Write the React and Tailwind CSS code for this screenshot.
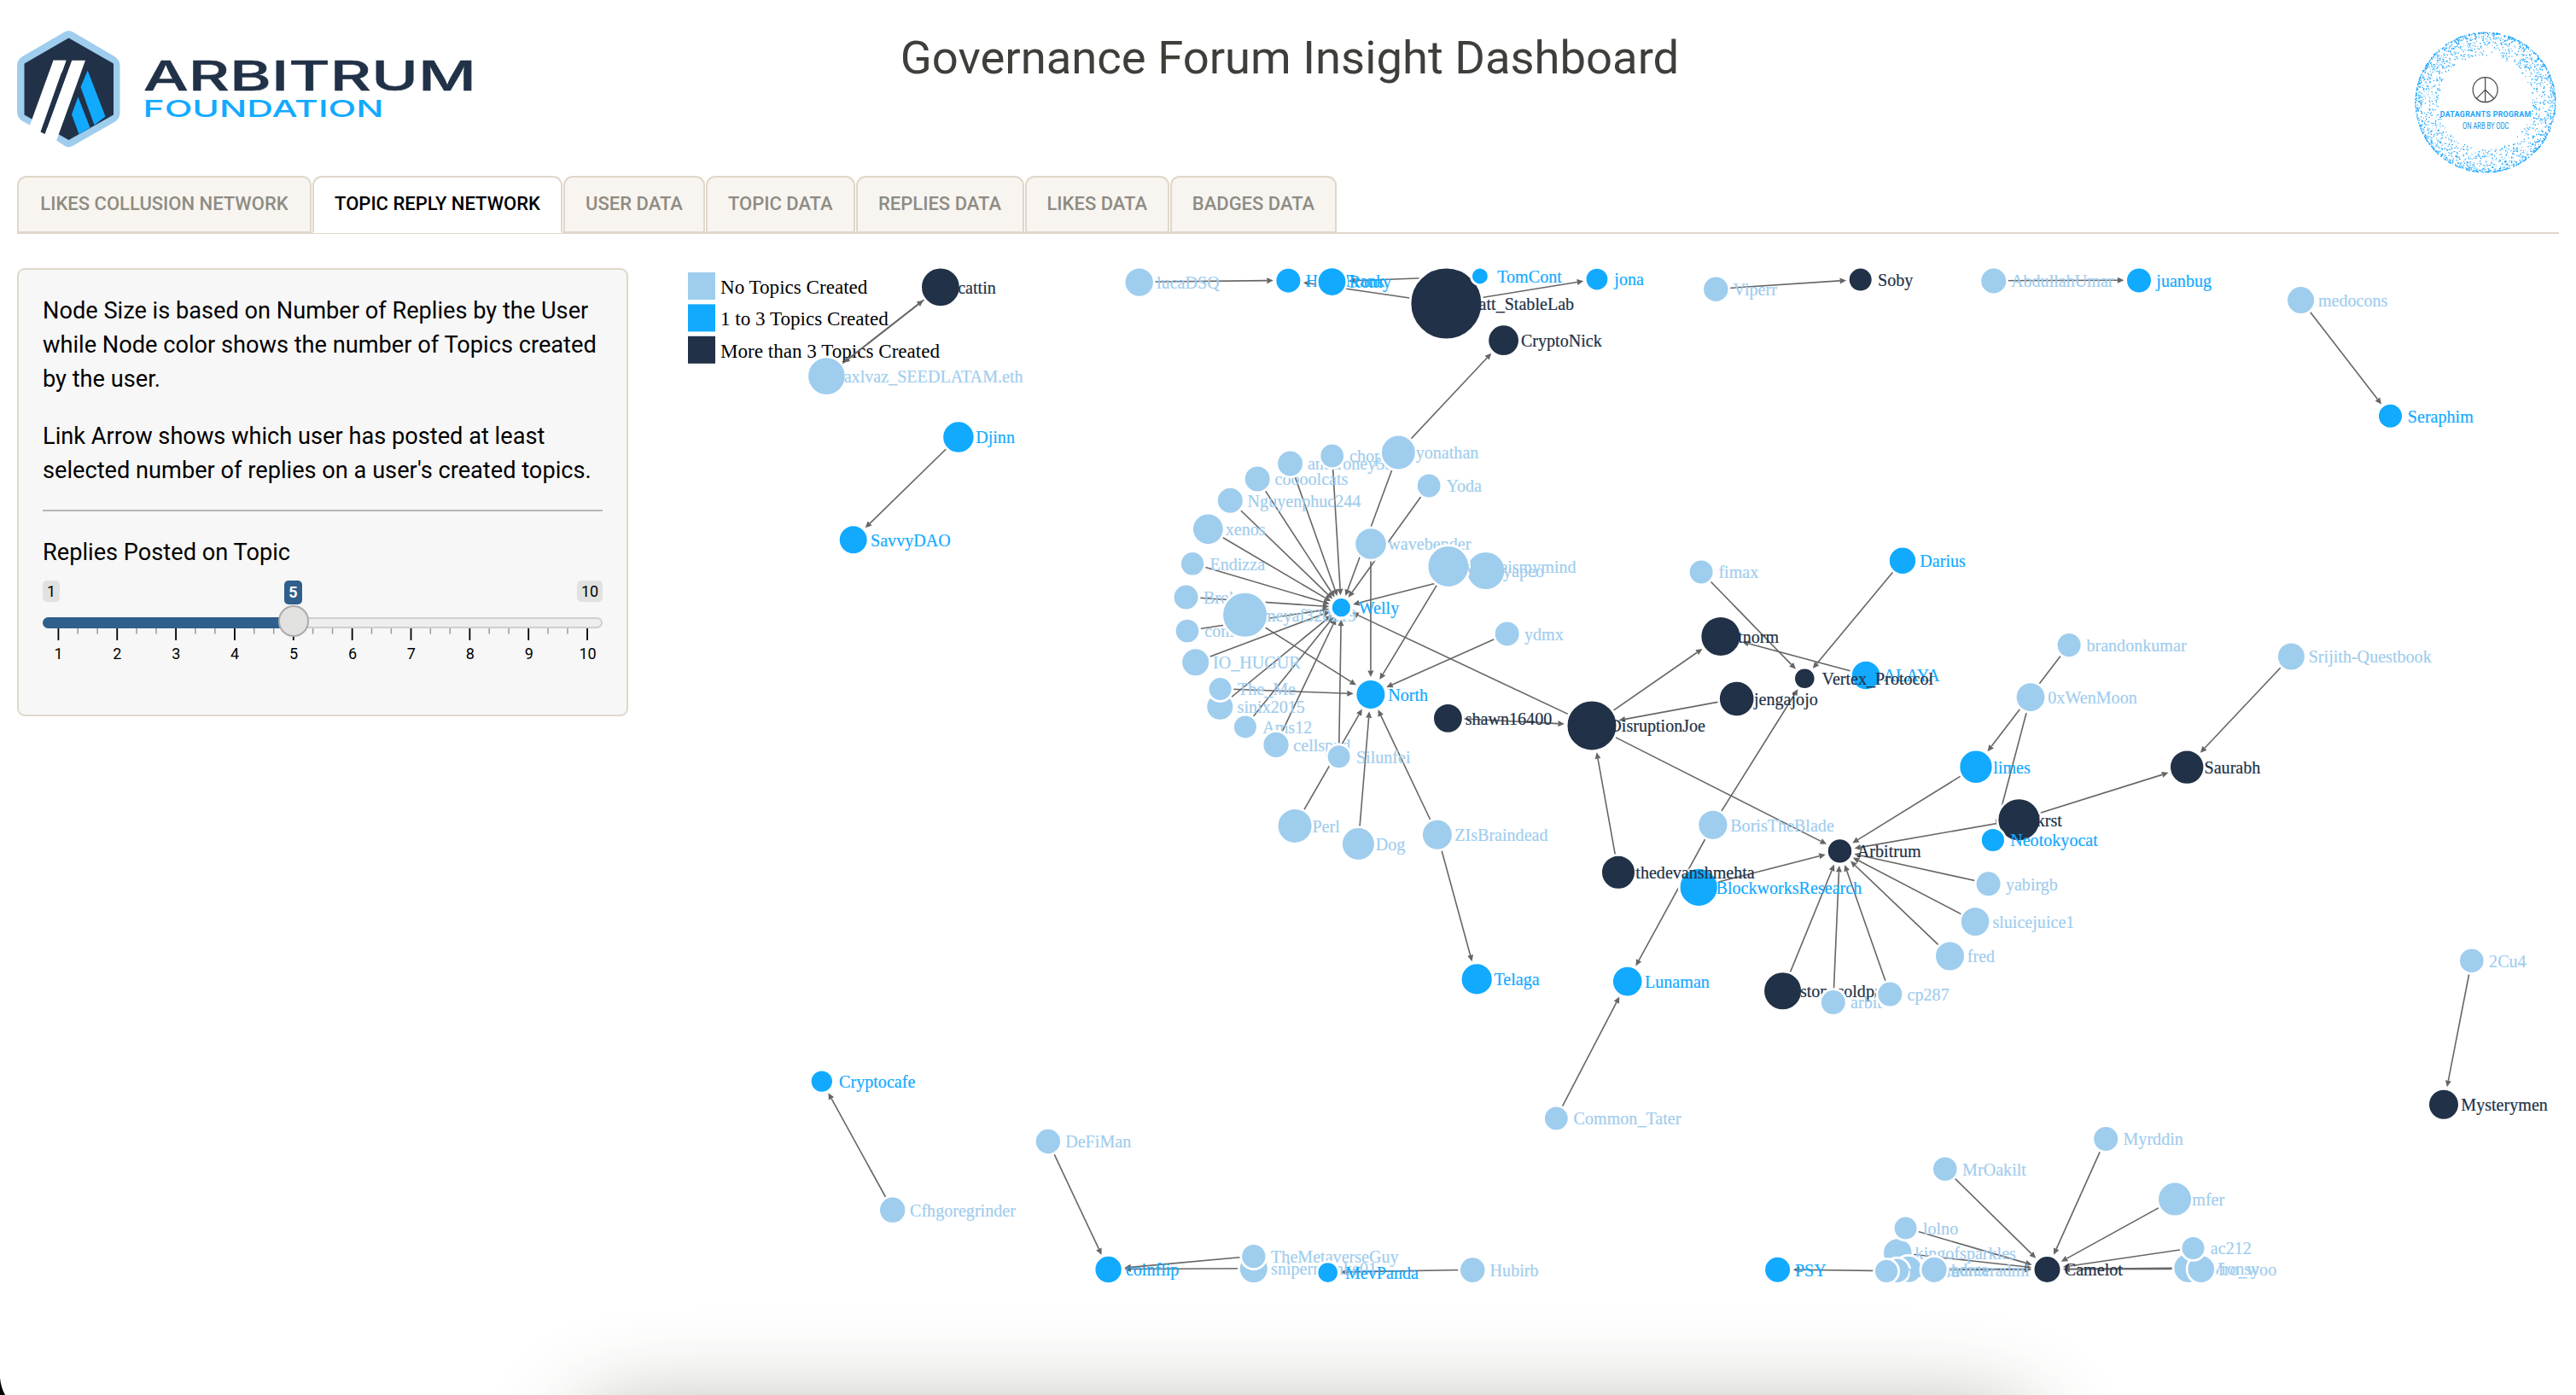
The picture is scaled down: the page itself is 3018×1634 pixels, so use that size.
import React from "react";

const L = "#9fcdee";
const B = "#12aaff";
const D = "#213147";

/* id, label, x, y, radius, colour; array order is paint order */
const NODES = [
  ["cattin", "cattin", 1101.9, 336, 21.9, D],
  ["axl", "axlvaz_SEEDLATAM.eth", 968.4, 440.3, 21.3, L],
  ["luca", "lucaDSQ", 1334.7, 330.3, 16.2, L],
  ["djinn", "Djinn", 1122.9, 511.7, 17.7, B],
  ["savvy", "SavvyDAO", 999.7, 632, 16, B],
  ["hwf", "HWTFrank", 1509.4, 328.4, 14, B],
  ["romy", "Romy", 1560.5, 329.8, 15.9, B],
  ["matt", "Matt_StableLab", 1694.4, 355.3, 41, D],
  ["tom", "TomCont", 1733.9, 323.2, 9, B],
  ["jona", "jona", 1871, 326.8, 12.4, B],
  ["nick", "CryptoNick", 1761.6, 398.4, 17.4, D],
  ["xenos", "xenos", 1415.4, 619.5, 17.4, L],
  ["nguyen", "Nguyenphuc244", 1441.3, 586, 14.5, L],
  ["cats", "coooolcats", 1473.2, 560.6, 14.5, L],
  ["anth", "anthroney55", 1511.6, 542.6, 14.5, L],
  ["chop", "chopper", 1560.7, 533.6, 13.4, L],
  ["yon", "yonathan", 1638.4, 529.7, 19.4, L],
  ["endizza", "Endizza", 1397.1, 660, 13.2, L],
  ["yoda", "Yoda", 1674.1, 568.7, 13.4, L],
  ["wave", "wavebender", 1606, 636.7, 17.8, L],
  ["bro", "Broke", 1389.6, 699.3, 14, L],
  ["conf", "confuse", 1391, 738.7, 13.3, L],
  ["meyaf", "meyaf320219", 1458.6, 720, 25.5, L],
  ["io", "IO_HUGUR", 1400.7, 775.4, 15.5, L],
  ["sinix", "sinix2015", 1429.3, 827.5, 15, L],
  ["theme", "The_Me", 1429.6, 806.8, 13, L],
  ["ams", "Ams12", 1458.9, 851.1, 13, L],
  ["cell", "cellspud", 1495, 872.1, 14.6, L],
  ["sil", "Silunfei", 1568.6, 886, 13, L],
  ["perl", "Perl", 1517.1, 967.1, 19.5, L],
  ["dog", "Dog", 1591.4, 988.2, 18.5, L],
  ["zis", "ZIsBraindead", 1683.9, 977.5, 17, L],
  ["welly", "Welly", 1571.4, 711.4, 10.6, B],
  ["north", "North", 1605.9, 813.2, 16.5, B],
  ["ydmx", "ydmx", 1765.7, 742.1, 14, L],
  ["yapeo", "yapeo", 1740.7, 668.2, 21.6, L],
  ["where", "whereismymind", 1696.8, 663.2, 23.4, L],
  ["shawn", "shawn16400", 1696.4, 841, 16.4, D],
  ["joe", "DisruptionJoe", 1865, 849.6, 28.5, D],
  ["fimax", "fimax", 1993.1, 669.7, 13.5, L],
  ["darius", "Darius", 2229, 656.4, 15.2, B],
  ["tnorm", "tnorm", 2015.9, 745.1, 22.5, D],
  ["alaya", "ALAYA", 2186.1, 790.7, 16.3, B],
  ["vertex", "Vertex_Protocol", 2114.3, 794.5, 11.3, D],
  ["jenga", "jengajojo", 2034.7, 818.2, 19.8, D],
  ["boris", "BorisTheBlade", 2006.9, 966, 16.6, L],
  ["block", "BlockworksResearch", 1990.2, 1039, 21.6, B],
  ["thedev", "thedevanshmehta", 1896, 1021.4, 19, D],
  ["arb", "Arbitrum", 2155.5, 996.6, 13.7, D],
  ["telaga", "Telaga", 1730.2, 1146.6, 17.6, B],
  ["luna", "Lunaman", 1906.7, 1149.3, 16.8, B],
  ["stone", "stonecoldpat", 2088.6, 1160.4, 21.5, D],
  ["arbit", "arbit", 2147.8, 1173.8, 14, L],
  ["cp", "cp287", 2214.3, 1164.2, 14, L],
  ["brandon", "brandonkumar", 2424.1, 755.3, 13.6, L],
  ["wen", "0xWenMoon", 2379, 816.3, 16.4, L],
  ["limes", "limes", 2315, 898, 18.7, B],
  ["saurabh", "Saurabh", 2562.2, 898.3, 19.2, D],
  ["srijith", "Srijith-Questbook", 2684.4, 768.7, 15.5, L],
  ["krst", "krst", 2365.4, 960, 24, D],
  ["neo", "Neotokyocat", 2334.9, 983.7, 13.1, B],
  ["yab", "yabirgb", 2329.6, 1035, 14, L],
  ["sluice", "sluicejuice1", 2314.1, 1079.3, 16.3, L],
  ["fred", "fred", 2284.5, 1119.7, 16.5, L],
  ["myr", "Myrddin", 2467.2, 1333.7, 14, L],
  ["oak", "MrOakilt", 2278.8, 1369, 13.8, L],
  ["mfer", "mfer", 2548, 1404.3, 19, L],
  ["king", "kingofsparkles", 2223.3, 1467.3, 16.3, L],
  ["lolno", "lolno", 2232.6, 1438.3, 13, L],
  ["psy", "PSY", 2082.6, 1487, 14.5, B],
  ["andrea", "oxandrea", 2236, 1486.5, 15, L],
  ["r2", "sandra", 2222.5, 1488, 13.8, L],
  ["r1", "hunt", 2210.1, 1488.6, 13.1, L],
  ["hunter", "hunteradmi", 2266, 1487, 14.6, L],
  ["vronsy", "Wronsy", 2564, 1485, 16.6, L],
  ["woo", "fro_woo", 2578.8, 1486.3, 15.3, L],
  ["ac", "ac212", 2569.5, 1461.7, 13, L],
  ["camelot", "Camelot", 2398.5, 1486.7, 15, D],
  ["ccafe", "Cryptocafe", 962.8, 1266.3, 12.2, B],
  ["cfh", "Cfhgoregrinder", 1045.7, 1417, 14.7, L],
  ["defi", "DeFiMan", 1227.9, 1336.7, 14.2, L],
  ["coin", "coinflip", 1298.6, 1486.7, 15.2, B],
  ["sniper", "snipermonke01", 1468.8, 1485.8, 16, L],
  ["meta", "TheMetaverseGuy", 1468.8, 1471.3, 13.7, L],
  ["mev", "MevPanda", 1555.7, 1490.3, 11.3, B],
  ["hub", "Hubirb", 1725.3, 1487.3, 14.3, L],
  ["common", "Common_Tater", 1823.3, 1309.7, 13.4, L],
  ["viperr", "Viperr", 2010.3, 338.5, 14.2, L],
  ["soby", "Soby", 2179.7, 327.3, 13, D],
  ["abd", "AbdullahUmar", 2335.7, 328.8, 14.5, L],
  ["juan", "juanbug", 2506, 328.2, 14, B],
  ["medo", "medocons", 2695.6, 351.3, 15.5, L],
  ["sera", "Seraphim", 2800.5, 487, 13.5, B],
  ["cu", "2Cu4", 2895.8, 1125, 13.8, L],
  ["myst", "Mysterymen", 2863, 1293.4, 17, D],
];

const LINKS = [
  "axl>cattin", "cattin>axl", "luca>hwf", "matt>hwf", "tom>romy", "matt>jona", "djinn>savvy",
  "yon>nick", "yon>welly", "yoda>welly", "wave>north", "yapeo>welly", "where>north",
  "xenos>welly", "nguyen>welly", "cats>welly", "anth>welly", "chop>welly", "endizza>welly",
  "bro>welly", "conf>welly", "io>welly", "sinix>welly", "ams>welly", "cell>welly", "sil>welly",
  "joe>welly", "meyaf>north", "theme>north", "perl>north", "dog>north", "zis>north",
  "ydmx>north", "zis>telaga", "shawn>joe", "jenga>joe", "thedev>joe", "joe>tnorm", "joe>arb",
  "alaya>tnorm", "fimax>vertex", "darius>vertex", "boris>vertex", "boris>luna", "common>luna",
  "block>arb", "stone>arb", "arbit>arb", "cp>arb", "fred>arb", "sluice>arb", "yab>arb",
  "krst>arb", "limes>arb", "brandon>limes", "wen>neo", "krst>saurabh", "srijith>saurabh",
  "viperr>soby", "abd>juan", "medo>sera", "cu>myst", "cfh>ccafe", "defi>coin", "meta>coin",
  "sniper>coin", "hub>mev", "myr>camelot", "oak>camelot", "mfer>camelot", "ac>camelot",
  "vronsy>camelot", "woo>camelot", "lolno>camelot", "king>camelot", "hunter>camelot",
  "andrea>camelot", "r2>camelot", "r1>psy",
];

const BY_ID = Object.fromEntries(NODES.map((n) => [n[0], n]));

function Link({ link }) {
  const [s, t] = link.split(">").map((id) => BY_ID[id]);
  const dx = t[2] - s[2];
  const dy = t[3] - s[3];
  const len = Math.hypot(dx, dy);
  const ux = dx / len;
  const uy = dy / len;
  const tx = t[2] - ux * (t[4] + 3.6);
  const ty = t[3] - uy * (t[4] + 3.6);
  const bx = tx - ux * 7.5;
  const by = ty - uy * 7.5;
  return (
    <g>
      <line x1={s[2]} y1={s[3]} x2={bx} y2={by} stroke="#666" strokeWidth="1.6" />
      <polygon
        fill="#666"
        points={`${tx},${ty} ${bx - uy * 3.5},${by + ux * 3.5} ${bx + uy * 3.5},${by - ux * 3.5}`}
      />
    </g>
  );
}

const LEGEND = [
  [L, "No Topics Created", 319],
  [B, "1 to 3 Topics Created", 356.4],
  [D, "More than 3 Topics Created", 393.8],
];

function Network() {
  return (
    <svg
      className="block h-[1200px] w-[2230px] shrink-0 overflow-visible font-['Liberation_Serif',serif]"
      viewBox="788 314 2230 1200"
    >
      {LEGEND.map(([c, label, y]) => (
        <g key={label}>
          <rect x="806" y={y} width="32" height="32" fill={c} />
          <text x="844" y={y + 25} fontSize="23.1" fill="#000">{label}</text>
        </g>
      ))}
      {LINKS.map((l) => <Link key={l} link={l} />)}
      {NODES.map(([id, label, x, y, r, c]) => (
        <g key={id}>
          <circle cx={x} cy={y + 0.3} r={r + 1.4} fill={c} stroke="#fff" strokeWidth="2.8" />
          <text x={x + 20.3} y={y + 7.5} fontSize="20.1" fill={c} stroke={c} strokeWidth="0.2">{label}</text>
        </g>
      ))}
    </svg>
  );
}

function ArbitrumLogo() {
  return (
    <svg className="block h-[140px] w-[540px]" viewBox="20 34 540 140">
      <path
        d="M75.500 37.500Q80.500 34.500 85.500 37.500L134 66Q140.500 70 140.500 77V132Q140.500 139 134 143L85 171Q80.500 173.500 76 171L66 164.500L35 146.500L26.500 142Q20 138 20 131V77Q20 70 26.500 66Z"
        fill="#9fcdee"
      />
      <path d="M80.500 44.500L133 74.500V134.500L80.500 164L28.500 134.500V74.500Z" fill={D} />
      <path d="M62.500 70.700H77.500L48 154.500L35 147L27 176H60L66 165L100 70.700H84L52.500 157L47 154.500Z" fill="#fff" />
      <path d="M62.500 70.700H77.500L46.500 158L33 152Z" fill="#fff" />
      <path d="M102.700 82.500L123.500 136.500L110.500 146.500L94.500 102Z" fill={B} />
      <path d="M91.500 113.500L105.500 149.500L92.500 157L84 134Z" fill={B} />
      <path d="M47.500 154.500L71.500 86.500L80 71H84L52.500 157Z" fill={D} />
      <text x="168" y="106" fontFamily="Inter, sans-serif" fontWeight="500" fontSize="48" fill={D} stroke={D} strokeWidth="0.5" textLength="390" lengthAdjust="spacingAndGlyphs">ARBITRUM</text>
      <text x="167.500" y="136.700" fontFamily="Inter, sans-serif" fontWeight="500" fontSize="27.500" fill={B} textLength="282" lengthAdjust="spacingAndGlyphs">FOUNDATION</text>
    </svg>
  );
}

function makeDots() {
  let seed = 7;
  const rnd = () => {
    seed = (seed * 16807) % 2147483647;
    return seed / 2147483647;
  };
  return Array.from({ length: 2100 }, () => {
    const a = rnd() * Math.PI * 2;
    const d = 82 - 27 * Math.pow(rnd(), 2.4);
    return [88 + d * Math.cos(a), 88 + d * Math.sin(a), 0.45 + rnd() * 0.4];
  });
}
const DOTS = makeDots();

function GrantBadge() {
  return (
    <svg className="block size-[176px]" viewBox="0 0 176 176">
      {DOTS.map(([x, y, r], i) => (
        <circle key={i} cx={x} cy={y} r={r} fill="#1aa3fb" />
      ))}
      <g fill="none" stroke="#444" strokeWidth="1.200">
        <circle cx="87.700" cy="73.200" r="14.500" />
        <path d="M87.700 58.700V87.700M87.700 73.200L77.500 83.400M87.700 73.200L98 83.400" />
      </g>
      <text x="34.700" y="105.200" fontFamily="Roboto, sans-serif" fontWeight="700" fontSize="8.800" fill="#1aa3fb" textLength="106.500">DATAGRANTS PROGRAM</text>
      <text x="61" y="119.200" fontFamily="Roboto, sans-serif" fontWeight="400" fontSize="11.500" fill="#1a8fe0" textLength="54.500" lengthAdjust="spacingAndGlyphs">ON ARB BY ODC</text>
    </svg>
  );
}

const TABS = [
  ["LIKES COLLUSION NETWORK", "w-[345px]"],
  ["TOPIC REPLY NETWORK", "w-[293px]"],
  ["USER DATA", "w-[166px]"],
  ["TOPIC DATA", "w-[174.5px]"],
  ["REPLIES DATA", "w-[197px]"],
  ["LIKES DATA", "w-[169.5px]"],
  ["BADGES DATA", "w-[195px]"],
];

function Tabs() {
  return (
    <nav className="mx-5 flex h-[68px] gap-[1px] border-b-2 border-[#dfd7ca] text-[22px] leading-none font-medium">
      {TABS.map(([t, w]) => (
        <div
          key={t}
          className={
            w + " -mb-[1px] flex shrink-0 items-center justify-center rounded-t-[11px] border-2 pb-[1px] whitespace-nowrap " +
            (t === "TOPIC REPLY NETWORK"
              ? "border-[#dfd7ca] border-b-white bg-white text-black"
              : "border-[#dfd7ca] bg-[#f8f5f0] text-[#8e8c84]")
          }
        >
          {t}
        </div>
      ))}
    </nav>
  );
}

function Slider() {
  const ticks = Array.from({ length: 28 }, (_, i) => i);
  return (
    <div className="relative h-[100px]">
      <div className="flex items-start justify-between text-[18px] leading-[25px]">
        <span className="h-[25px] w-5 rounded-[5px] bg-[#e1e1df] text-center">1</span>
        <span className="h-[25px] w-[30px] rounded-[5px] bg-[#e1e1df] text-center">10</span>
      </div>
      <div className="mt-[18px] flex h-[13px] rounded-full border-2 border-[#cfcfcf] bg-[#eee]">
        <div className="-m-[2px] h-[13px] w-[294px] rounded-l-full bg-[#2f5f8c]" />
      </div>
      <svg className="block h-[14px] w-full" viewBox="0 0 656 14">
        {ticks.map((i) => (
          <rect
            key={i}
            x={17.500 + i * 22.950}
            y="0"
            width={i % 3 === 0 ? 1.800 : 1.500}
            height={i % 3 === 0 ? 14 : 6.500}
            fill={i % 3 === 0 ? "#000" : "#999"}
          />
        ))}
      </svg>
      <div className="-ml-[16px] mt-[5px] flex w-[689px] text-[18px] leading-[22px]">
        {[1, 2, 3, 4, 5, 6, 7, 8, 9, 10].map((n) => (
          <span key={n} className="flex-1 text-center">{n}</span>
        ))}
      </div>
      <span className="absolute top-0 left-[283px] h-[28px] w-[21px] rounded-[5px] bg-[#2f5f8c] text-center text-[18px] leading-[28px] font-bold text-white">5</span>
      <span className="absolute top-[29px] left-[275.5px] h-[37px] w-[36px] rounded-full border-2 border-[#ababab] bg-[#e1e1df]" />
    </div>
  );
}

export default function App() {
  return (
    <div className="relative h-[1634px] w-[3018px] overflow-hidden bg-white font-[Roboto,sans-serif] text-black">
      <header className="flex h-[206px] items-start justify-between pt-[32px] pr-[18px] pl-5">
        <div className="w-[760px] pt-[2px]"><ArbitrumLogo /></div>
        <h1 className="pt-[1px] pl-[2px] text-[54.4px] leading-[70px] whitespace-nowrap text-[#3e3f3a]">Governance Forum Insight Dashboard</h1>
        <div className="flex w-[760px] justify-end"><GrantBadge /></div>
      </header>
      <Tabs />
      <main className="flex items-start justify-between pt-10 pl-5">
        <aside className="h-[525px] w-[716px] rounded-[9px] border-2 border-[#dfd7ca] bg-[#f7f7f7] px-7 pt-[28px] text-[27.2px] leading-[40px]">
          <p className="whitespace-nowrap">
            Node Size is based on Number of Replies by the User<br />
            while Node color shows the number of Topics created<br />
            by the user.
          </p>
          <p className="mt-[27px] whitespace-nowrap">
            Link Arrow shows which user has posted at least<br />
            selected number of replies on a user's created topics.
          </p>
          <div className="mt-[26px] h-[2px] bg-[#b7b7b7]" />
          <div className="mt-[28px] mb-[13px]">Replies Posted on Topic</div>
          <Slider />
        </aside>
        <Network />
      </main>
      <div className="absolute top-[1664px] left-[690px] h-[100px] w-[1680px] rounded-[40px] shadow-[0_0_110px_8px_rgba(60,60,40,0.44)]" />
      <svg className="absolute bottom-0 left-0 h-[24px] w-[8px]" viewBox="0 0 8 24">
        <path d="M0 4Q1 15 6 24H0Z" fill="#000" />
      </svg>
    </div>
  );
}
